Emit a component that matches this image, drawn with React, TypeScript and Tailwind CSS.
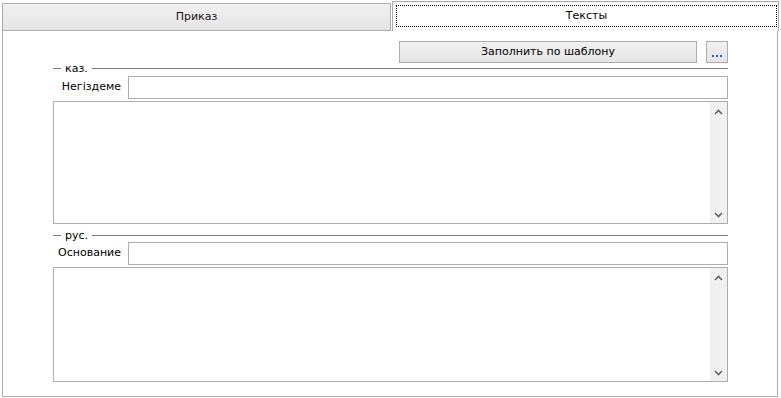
import React from "react";

const font = { fontFamily: '"DejaVu Sans", Verdana, sans-serif' };

const Chevron: React.FC<{ up?: boolean }> = ({ up }) => (
  <svg width="9" height="6" viewBox="0 0 9 6" className="block">
    <path
      d={up ? "M1 5 L4.5 1.5 L8 5" : "M1 1 L4.5 4.5 L8 1"}
      fill="none"
      stroke="#606060"
      strokeWidth="1.6"
    />
  </svg>
);

// многострочное поле со скроллбаром справа
const Memo: React.FC<{ height: string }> = ({ height }) => (
  <div className={`flex ${height} w-full border border-[#adadad] bg-white`}>
    <div className="flex-1" />
    <div className="flex w-[17px] flex-col items-center justify-between bg-[#f0f0f0] pb-[5px] pt-[7px]">
      <Chevron up />
      <Chevron />
    </div>
  </div>
);

const GroupHeader: React.FC<{ title: string }> = ({ title }) => (
  <div className="flex h-[11px] items-center">
    <div className="h-px w-[8px] bg-[#7a7a7a]" />
    <span className="px-[4px] text-[11px] leading-none text-black">{title}</span>
    <div className="h-px flex-1 bg-[#7a7a7a]" />
  </div>
);

const LabeledInput: React.FC<{ label: string }> = ({ label }) => (
  <div className="flex h-[23px] items-center">
    <div className="w-[75px] pr-[7px] text-right text-[11px] text-black">{label}</div>
    <div className="h-[23px] flex-1 border border-[#adadad] bg-white" />
  </div>
);

export default function App() {
  return (
    <div className="h-[398px] w-[781px] overflow-hidden bg-white" style={font}>
      {/* вкладки */}
      <div className="flex h-[31px] items-end pl-[2px]">
        <div className="flex h-[28px] w-[389px] items-center justify-center border border-[#acacac] bg-gradient-to-b from-[#f0f0f0] to-[#e5e5e5] text-[11px] text-[#1a1020]">
          Приказ
        </div>
        <div className="ml-px flex h-[30px] w-[387px] border-x border-t border-[#acacac] bg-white pb-[4px] pl-[3px] pr-px pt-[3px]">
          <div className="flex flex-1 items-center justify-center border border-dotted border-black text-[11px] text-black">
            Тексты
          </div>
        </div>
      </div>

      {/* содержимое вкладки */}
      <div className="ml-[2px] h-[366px] w-[776px] border-x border-b border-[#acacac] bg-white">
        <div className="ml-[50px] w-[675px] pt-[10px]">
          <div className="flex h-[22px] justify-end gap-[9px]">
            <button className="flex h-[22px] w-[298px] items-center justify-center border border-[#acacac] bg-gradient-to-b from-[#f0f0f0] to-[#e5e5e5] text-[11px] text-black">
              Заполнить по шаблону
            </button>
            <button className="flex h-[22px] w-[22px] items-end justify-center gap-[2px] border border-[#acacac] bg-gradient-to-b from-[#f0f0f0] to-[#e5e5e5] pb-[5px]">
              <span className="h-[2px] w-[2px] bg-[#1f5fb4]" />
              <span className="h-[2px] w-[2px] bg-[#1f5fb4]" />
              <span className="h-[2px] w-[2px] bg-[#1f5fb4]" />
            </button>
          </div>

          <GroupHeader title="каз." />
          <div className="mt-[2px]">
            <LabeledInput label="Негіздеме" />
          </div>
          <div className="mt-[2px]">
            <Memo height="h-[123px]" />
          </div>

          <div className="mt-[6px]">
            <GroupHeader title="рус." />
          </div>
          <div className="mt-px">
            <LabeledInput label="Основание" />
          </div>
          <div className="mt-[2px]">
            <Memo height="h-[115px]" />
          </div>
        </div>
      </div>
    </div>
  );
}
